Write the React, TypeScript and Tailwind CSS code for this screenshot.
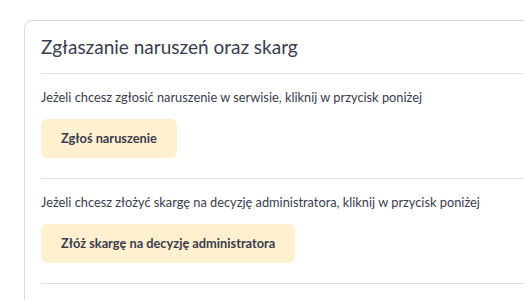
export default function App() {
  const sections = [
    {
      text: "Jeżeli chcesz zgłosić naruszenie w serwisie, kliknij w przycisk poniżej",
      button: "Zgłoś naruszenie",
    },
    {
      text: "Jeżeli chcesz złożyć skargę na decyzję administratora, kliknij w przycisk poniżej",
      button: "Złóż skargę na decyzję administratora",
    },
  ];

  return (
    <div className="h-[300px] w-[524px] overflow-hidden bg-white font-['Lato',sans-serif] text-[#3b3c4e]">
      <div className="ml-[24px] mt-[20px] w-[560px] rounded-tl-lg border border-[#dcdcdc] px-4 pb-10">
        <h2 className="py-3 text-[19px] leading-[28px]">Zgłaszanie naruszeń oraz skarg</h2>
        {sections.map((s) => (
          <div key={s.button} className="border-t border-[#e0e0e0] pb-5 pt-[13px]">
            <p className="text-[12.8px] leading-[20px]">{s.text}</p>
            <button
              type="button"
              className="mt-[12px] h-[39px] rounded-md bg-[#fff1cf] px-5 text-[12.8px] font-bold"
            >
              {s.button}
            </button>
          </div>
        ))}
        <div className="border-t border-[#e0e0e0]" />
      </div>
    </div>
  );
}
